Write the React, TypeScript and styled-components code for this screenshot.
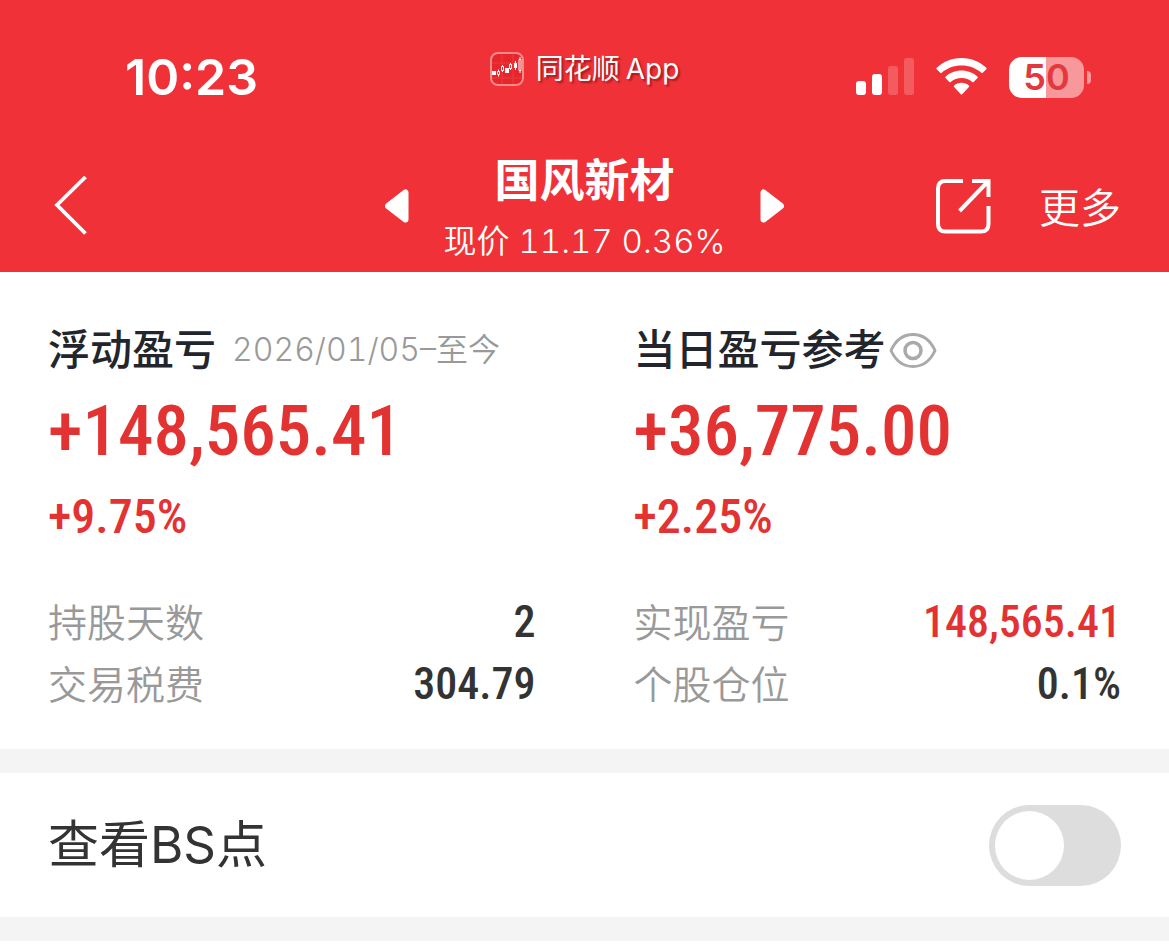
import React from "react";
import styled, { createGlobalStyle } from "styled-components";

const sans = `Inter, "Noto Sans CJK SC", sans-serif`;
const numeric = `"Roboto Condensed", Roboto, sans-serif`;
const red = "#e33232";

const GlobalStyle = createGlobalStyle`
  *, *::before, *::after { box-sizing: border-box; }
  body { margin: 0; background: #fff; font-family: ${sans}; color: #333; }
  button { padding: 0; border: 0; background: none; color: inherit; font: inherit; cursor: pointer; }
  h1, h2, p, dl, dd, dt { margin: 0; font-weight: 400; }
  svg { display: block; }
`;

const Header = styled.header`
  background: #f03238;
  color: #fff;
  padding-bottom: 2px;
`;

const StatusBar = styled.div`
  display: grid;
  grid-template-columns: 1fr auto 1fr;
  height: 150px;
  padding-top: 44px;
`;

const Clock = styled.time`
  padding-left: 125px;
  font-size: 50px;
  font-weight: 600;
  line-height: 66px;
`;

const AppTag = styled.div`
  display: flex;
  align-items: center;
  gap: 12px;
  height: 50px;
  font-size: 28px;
  text-shadow: 2px 2px 2px rgba(90, 0, 0, 0.5);
`;

const AppName = styled.span`
  display: flex;
  gap: 6px;
  line-height: 52px;
`;

const Indicators = styled.div`
  display: flex;
  align-items: center;
  justify-content: flex-end;
  gap: 22px;
  height: 66px;
  padding-right: 78px;
`;

const Battery = styled.div`
  display: flex;
  align-items: center;
  gap: 3px;

  &::after {
    content: "";
    width: 4px;
    height: 13px;
    border-radius: 0 4px 4px 0;
    background: #f8989b;
  }
`;

const BatteryLevel = styled.span`
  width: 75px;
  border-radius: 13px;
  background: linear-gradient(90deg, #fff 50%, #f8989b 50%);
  color: #e2383e;
  font-size: 36px;
  font-weight: 600;
  line-height: 41px;
  text-align: center;
`;

const NavBar = styled.nav`
  display: grid;
  grid-template-columns: 1fr auto 1fr;
`;

const NavSide = styled.div<{ $end?: boolean }>`
  display: flex;
  align-items: center;
  justify-content: ${(p) => (p.$end ? "flex-end" : "flex-start")};
  gap: 48px;
  height: 112px;
  padding: 0 48px;
`;

const Switcher = styled.div`
  display: flex;
  gap: 35px;

  > button { height: 112px; }
`;

const Heading = styled.div`
  text-align: center;
  white-space: nowrap;
`;

const StockName = styled.h1`
  && { font-weight: 700; }
  font-size: 45px;
  line-height: 62px;
`;

const Quote = styled.p`
  font-size: 33px;
  && { font-weight: 350; }
  font-variant-numeric: tabular-nums;
  line-height: 58px;
`;

const MoreButton = styled.button`
  && { font-size: 41px; font-weight: 350; padding-top: 4px; }
  line-height: 60px;
`;

const Summary = styled.section`
  display: grid;
  grid-template-columns: 1fr 1fr;
  gap: 98px;
  padding: 48px 48px 33px;
`;

const CardTitle = styled.div`
  display: flex;
  align-items: center;
  height: 60px;
  white-space: nowrap;
`;

const Label = styled.h2`
  && { font-weight: 500; }
  font-size: 42px;
  line-height: 60px;
  color: #22252b;
`;

const Period = styled.span`
  margin-left: 16px;
  font-size: 32px;
  font-weight: 350;
  font-variant-numeric: tabular-nums;
  line-height: 60px;
  color: #999;
`;

const Amount = styled.p`
  font-family: ${numeric};
  && { font-weight: 500; }
  font-size: 71px;
  line-height: 102px;
  color: ${red};
`;

const Rate = styled.p`
  font-family: ${numeric};
  && { font-weight: 500; }
  font-size: 48px;
  line-height: 70px;
  color: ${red};
`;

const Stats = styled.dl`
  margin-top: 40px;
`;

const StatRow = styled.div`
  display: flex;
  justify-content: space-between;
  line-height: 62px;
`;

const StatName = styled.dt`
  font-size: 39px;
  && { font-weight: 350; }
  color: #999;
`;

const StatValue = styled.dd<{ $gain?: boolean }>`
  font-family: ${numeric};
  && { font-weight: 500; }
  font-size: 44px;
  line-height: 60px;
  color: ${(p) => (p.$gain ? red : "#333")};
`;

const Divider = styled.div`
  height: 24px;
  background: #f4f4f4;
`;

const SettingRow = styled.label`
  display: flex;
  align-items: center;
  justify-content: space-between;
  height: 144px;
  padding: 0 48px;
  font-size: 51px;
  color: #333;
`;

const SettingName = styled.span`
  line-height: 72px;
`;

const Toggle = styled.input`
  appearance: none;
  display: flex;
  align-items: center;
  width: 132px;
  height: 81px;
  margin: 0;
  padding: 6px;
  border-radius: 41px;
  background: #ddd;
  cursor: pointer;

  &::before {
    content: "";
    width: 69px;
    height: 69px;
    border-radius: 50%;
    background: #fff;
  }

  &:checked { justify-content: flex-end; background: ${red}; }
`;

const EyeButton = styled.button`
  margin-left: 3px;
`;

const AppLogo = () => (
  <svg width="34" height="34" viewBox="0 0 34 34" fill="none" aria-hidden="true">
    <rect x="1" y="1" width="32" height="32" rx="7" fill="#e6262c" stroke="#fa8a8c" strokeWidth="2" />
    <path d="M2 11h30M2 26h30M12 2v30M23 2v30" stroke="#ea3a3f" strokeWidth="1" />
    <path d="M2 19h4v4H2zM15 16h4v5h-4zM24 11h3v5h-3z" fill="#fff" />
    <path d="M8.500 17.500v7M12.500 13v7M20.500 11v7M25.500 9v9M30 5v16" stroke="#fff" strokeWidth="1" />
    <path d="M7.500 19.500h2v3h-2zM11.500 14.500h2v4h-2zM19.500 12.500h2v4h-2zM29 7.500h2v11h-2z" fill="#e6262c" stroke="#fff" strokeWidth="1" />
  </svg>
);

const SignalIcon = () => (
  <svg width="58" height="38" viewBox="0 0 58 38" fill="#fff" aria-hidden="true">
    <rect x="0" y="23" width="10" height="14" rx="3" />
    <rect x="16" y="16" width="10" height="21" rx="3" />
    <rect x="32" y="8" width="10" height="29" rx="3" opacity="0.2" />
    <rect x="48" y="0" width="10" height="37" rx="3" opacity="0.2" />
  </svg>
);

const WifiIcon = () => (
  <svg width="51" height="38" viewBox="0 0 51 38" fill="#fff" aria-hidden="true">
    <path d="M25.500 0C35.500 0 44 3.800 50.300 9.800Q51 10.500 50.300 11.200L46.700 14.800Q46 15.500 45.300 14.800C40 10 33 7.500 25.500 7.500S11 10 5.700 14.800Q5 15.500 4.300 14.800L0.700 11.200Q0 10.500 0.700 9.800C7 3.800 15.500 0 25.500 0Z" />
    <path d="M25.500 12.500C31.800 12.500 37.300 14.800 41.500 18.700Q42.200 19.400 41.500 20.100L37.700 23.900Q37 24.600 36.300 23.900C33.400 21.400 29.700 19.900 25.500 19.900S17.600 21.400 14.700 23.900Q14 24.600 13.300 23.900L9.500 20.100Q8.800 19.400 9.500 18.700C13.700 14.800 19.200 12.500 25.500 12.500Z" />
    <path d="M25.500 24.800C28.400 24.800 31 25.800 32.900 27.600Q33.700 28.400 32.900 29.100L26.200 36.300Q25.500 37 24.800 36.300L18.100 29.100Q17.300 28.400 18.100 27.600C20 25.800 22.600 24.800 25.500 24.800Z" />
  </svg>
);

const BackIcon = () => (
  <svg width="46" height="60" viewBox="0 0 46 60" fill="none" stroke="#fff" strokeWidth="3.800" aria-hidden="true">
    <path d="M37.500 1L9 29L37.500 57.500" strokeLinejoin="miter" />
  </svg>
);

const TriangleIcon = ({ next }: { next?: boolean }) => (
  <svg width="24" height="34" viewBox="0 0 24 34" fill="#fff" stroke="#fff" strokeWidth="6" strokeLinejoin="round" aria-hidden="true">
    <path d={next ? "M3.500 3.500v27L21 17z" : "M20.500 3.500v27L3 17z"} />
  </svg>
);

const ShareIcon = () => (
  <svg width="56" height="56" viewBox="0 0 56 56" fill="none" stroke="#fff" strokeWidth="4" aria-hidden="true">
    <path d="M28 3H10.500Q3 3 3 10.500V46Q3 53.500 10.500 53.500H46Q53.500 53.500 53.500 46V28" />
    <path d="M37 3H53.500V19M53 3.500L24.500 33" />
  </svg>
);

const EyeIcon = () => (
  <svg width="48" height="36" viewBox="0 0 48 36" fill="none" stroke="#aaa" strokeWidth="3" aria-hidden="true">
    <path d="M2 18.500C7 7.500 15 2.500 24 2.500S41 7.500 46 18.500C41 29.500 33 34.500 24 34.500S7 29.500 2 18.500Z" strokeLinejoin="round" />
    <circle cx="24" cy="18.500" r="8" strokeWidth="3.500" />
  </svg>
);

interface Stat {
  name: string;
  value: string;
  gain?: boolean;
}

const holdingStats: Stat[] = [
  { name: "持股天数", value: "2" },
  { name: "交易税费", value: "304.79" },
];

const positionStats: Stat[] = [
  { name: "实现盈亏", value: "148,565.41", gain: true },
  { name: "个股仓位", value: "0.1%" },
];

const StatList = ({ items }: { items: Stat[] }) => (
  <Stats>
    {items.map((s) => (
      <StatRow key={s.name}>
        <StatName>{s.name}</StatName>
        <StatValue $gain={s.gain}>{s.value}</StatValue>
      </StatRow>
    ))}
  </Stats>
);

export default function App() {
  return (
    <>
      <GlobalStyle />
      <Header>
        <StatusBar>
          <Clock>10:23</Clock>
          <AppTag>
            <AppLogo />
            <AppName>
              <span>同花顺</span>
              <span>App</span>
            </AppName>
          </AppTag>
          <Indicators>
            <SignalIcon />
            <WifiIcon />
            <Battery>
              <BatteryLevel>50</BatteryLevel>
            </Battery>
          </Indicators>
        </StatusBar>
        <NavBar>
          <NavSide>
            <button type="button" aria-label="返回">
              <BackIcon />
            </button>
          </NavSide>
          <Switcher>
            <button type="button" aria-label="上一只">
              <TriangleIcon />
            </button>
            <Heading>
              <StockName>国风新材</StockName>
              <Quote>现价 11.17 0.36%</Quote>
            </Heading>
            <button type="button" aria-label="下一只">
              <TriangleIcon next />
            </button>
          </Switcher>
          <NavSide $end>
            <button type="button" aria-label="分享">
              <ShareIcon />
            </button>
            <MoreButton type="button">更多</MoreButton>
          </NavSide>
        </NavBar>
      </Header>
      <main>
        <Summary>
          <div>
            <CardTitle>
              <Label>浮动盈亏</Label>
              <Period>2026/01/05–至今</Period>
            </CardTitle>
            <Amount>+148,565.41</Amount>
            <Rate>+9.75%</Rate>
            <StatList items={holdingStats} />
          </div>
          <div>
            <CardTitle>
              <Label>当日盈亏参考</Label>
              <EyeButton type="button" aria-label="显示或隐藏金额">
                <EyeIcon />
              </EyeButton>
            </CardTitle>
            <Amount>+36,775.00</Amount>
            <Rate>+2.25%</Rate>
            <StatList items={positionStats} />
          </div>
        </Summary>
        <Divider />
        <SettingRow>
          <SettingName>查看BS点</SettingName>
          <Toggle type="checkbox" role="switch" />
        </SettingRow>
        <Divider />
      </main>
    </>
  );
}
